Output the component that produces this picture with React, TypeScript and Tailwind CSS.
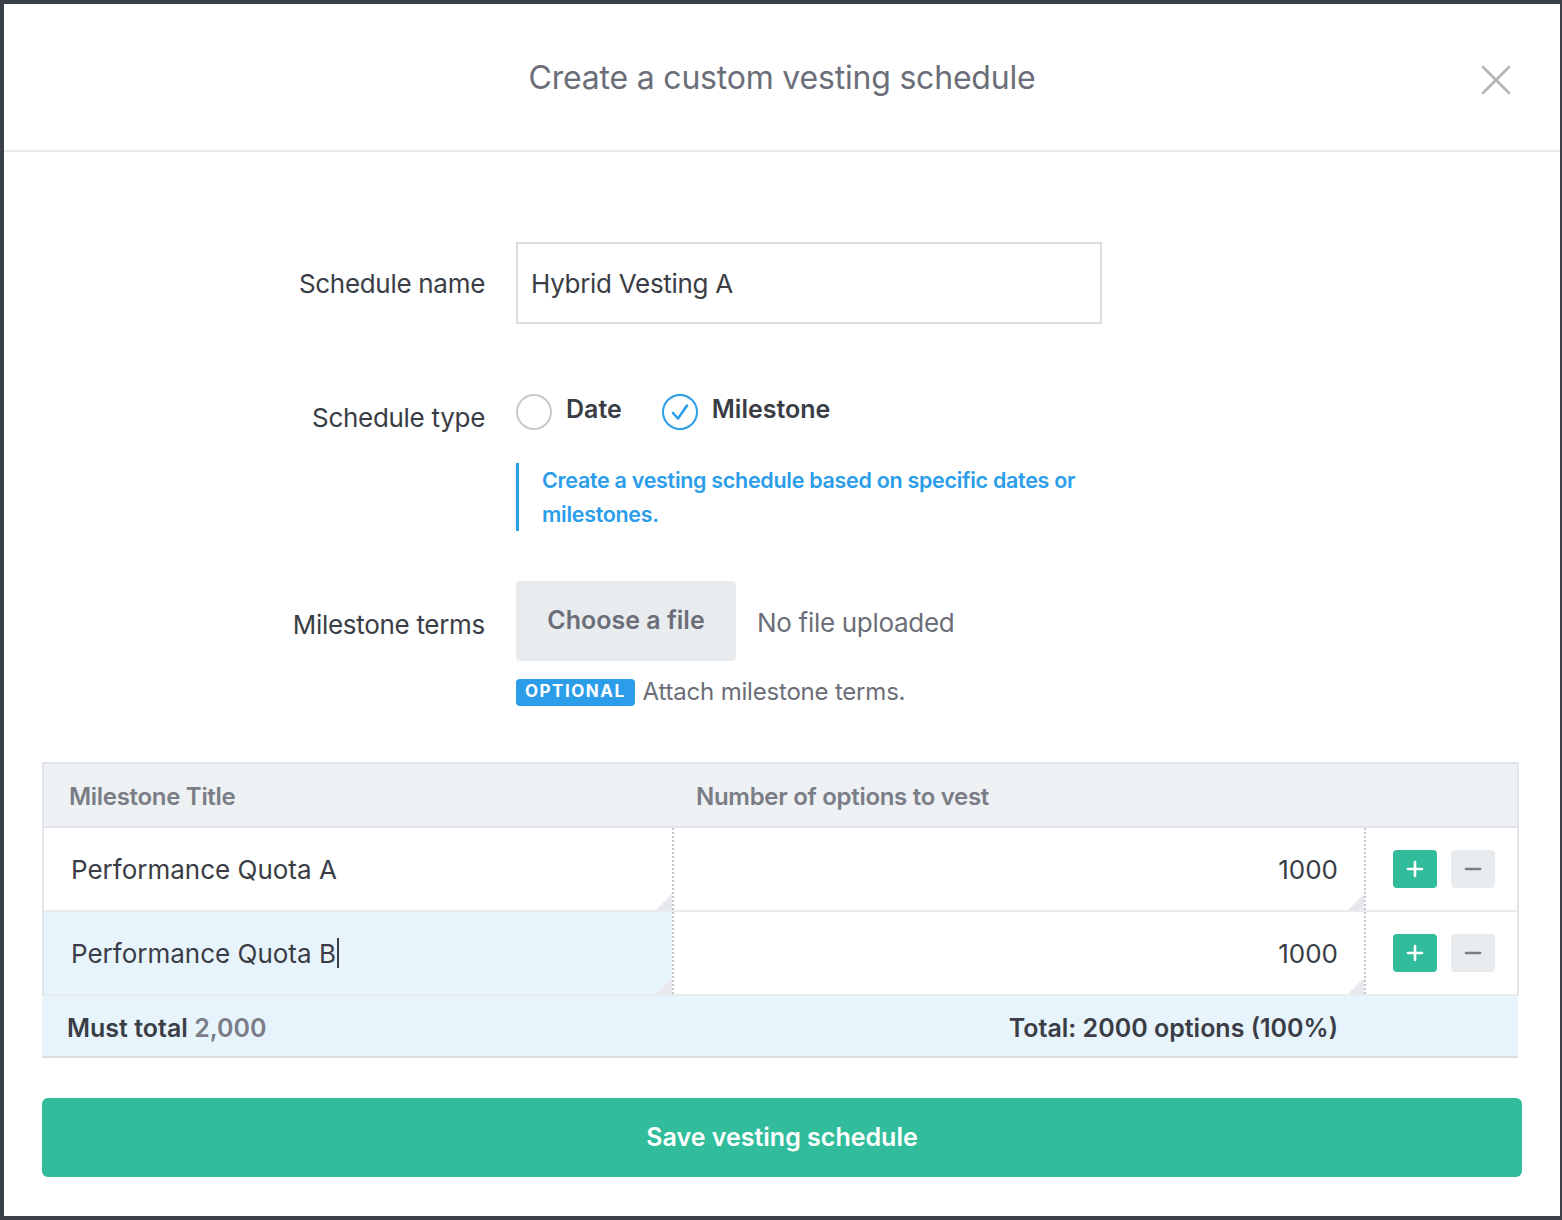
import React from "react";

function Corner() {
  return (
    <svg className="absolute right-0 bottom-0" width="16" height="16" viewBox="0 0 16 16">
      <path d="M16 0 L16 16 L0 16 Z" fill="#e6e8ec" />
    </svg>
  );
}

function Row({ title, value, focused, cursor }: { title: string; value: string; focused?: boolean; cursor?: boolean }) {
  return (
    <div className="flex h-[84px] border-b-2 border-[#e8ecef]">
      <div className={`relative w-[628px] flex items-center pl-[27px] text-[26px] text-[#3a3d45] ${focused ? "bg-[#e8f4fc]" : "bg-white"}`}>
        <span>{title}</span>
        {cursor && <span className="inline-block w-[2px] h-[30px] bg-[#3a3d45] ml-[1px]" />}
        <Corner />
      </div>
      <div className="w-0 border-l-2 border-dotted border-[#c4c6cc]" />
      <div className="relative w-[690px] flex items-center justify-end pr-[26px] text-[26px] text-[#3a3d45] bg-white">
        <span>{value}</span>
        <Corner />
      </div>
      <div className="w-0 border-l-2 border-dotted border-[#c4c6cc]" />
      <div className="flex-1 flex items-center pl-[27px] gap-[14px] bg-white">
        <div className="w-[44px] h-[38px] rounded-[4px] bg-[#31bd9b] flex items-center justify-center">
          <svg width="18" height="18" viewBox="0 0 18 18"><path d="M9 2v14M2 9h14" stroke="white" strokeWidth="2.6" strokeLinecap="round" /></svg>
        </div>
        <div className="w-[44px] h-[38px] rounded-[4px] bg-[#e9ecef] flex items-center justify-center">
          <svg width="18" height="18" viewBox="0 0 18 18"><path d="M2 9h14" stroke="#7a7d86" strokeWidth="2.6" strokeLinecap="round" /></svg>
        </div>
      </div>
    </div>
  );
}

export default function App() {
  return (
    <div className="w-[1562px] h-[1220px] bg-[#3b4048] pt-[4px] pl-[4px] pr-[2px] pb-[4px] font-['Inter',sans-serif]">
      <div className="w-full h-full bg-white flex flex-col">
        {/* Header */}
        <div className="relative h-[148px] border-b-2 border-[#e8ecef] flex items-center justify-center">
          <h1 className="text-[32px] text-[#6b6e78] font-normal tracking-[-0.2px] mt-[2px]">Create a custom vesting schedule</h1>
          <button className="absolute right-[48px] top-[60px] w-[32px] h-[32px]">
            <svg width="32" height="32" viewBox="0 0 32 32">
              <path d="M3 3 L29 29 M29 3 L3 29" stroke="#b4b5bb" strokeWidth="2.6" strokeLinecap="round" />
            </svg>
          </button>
        </div>

        {/* Form */}
        <div className="pt-[90px] flex flex-col">
          <div className="flex items-center">
            <div className="w-[481px] text-right text-[26px] text-[#3a3d45] tracking-[-0.3px]">Schedule name</div>
            <div className="ml-[31px] w-[586px] h-[82px] border-2 border-[#dcdde2] flex items-center pl-[13px] text-[26px] text-[#3a3d45] tracking-[-0.3px]">
              Hybrid Vesting A
            </div>
          </div>

          <div className="flex mt-[70px]">
            <div className="w-[481px] text-right text-[26px] text-[#3a3d45] pt-[4px] tracking-[-0.3px]">Schedule type</div>
            <div className="ml-[31px] flex flex-col">
              <div className="flex items-center h-[36px]">
                <div className="w-[36px] h-[36px] rounded-full border-2 border-[#c9cacf]" />
                <span className="ml-[14px] text-[25px] font-semibold text-[#3a3d45] mt-[-4px]">Date</span>
                <div className="ml-[40px] w-[36px] h-[36px] rounded-full border-2 border-[#2b9de9] flex items-center justify-center">
                  <svg width="24" height="24" viewBox="0 0 24 24"><path d="M5 13 L10 18.5 L19 5.5" fill="none" stroke="#2b9de9" strokeWidth="2.6" strokeLinecap="round" strokeLinejoin="round" /></svg>
                </div>
                <span className="ml-[14px] text-[25px] font-semibold text-[#3a3d45] mt-[-4px]">Milestone</span>
              </div>
              <div className="mt-[33px] border-l-[3px] border-[#2b9de9] pl-[23px] text-[21.5px] leading-[34px] font-semibold text-[#2b9de9] tracking-[-0.3px] w-[600px]">
                Create a vesting schedule based on specific dates or<br />milestones.
              </div>
            </div>
          </div>

          <div className="flex items-center mt-[50px]">
            <div className="w-[481px] text-right text-[26px] text-[#3a3d45] pt-[6px] tracking-[-0.3px]">Milestone terms</div>
            <div className="ml-[31px] w-[220px] h-[80px] rounded-[4px] bg-[#e9ecef] flex items-center justify-center text-[25px] font-semibold text-[#6b6e78]">
              Choose a file
            </div>
            <span className="ml-[21px] text-[26px] text-[#6b6e78] pt-[2px] tracking-[-0.3px]">No file uploaded</span>
          </div>

          <div className="flex items-center mt-[13px] ml-[512px]">
            <span className="h-[27px] px-[9px] rounded-[4px] bg-[#2b9de9] text-white text-[17px] font-bold tracking-[1.5px] flex items-center">OPTIONAL</span>
            <span className="ml-[8px] text-[24px] text-[#6b6e78] tracking-[-0.2px]">Attach milestone terms.</span>
          </div>

          {/* Table */}
          <div className="mt-[52px] mx-[38px]">
            <div className="mr-[3px] border-2 border-[#e1e5ea] border-b-0">
              <div className="flex h-[64px] pt-[4px] bg-[#eef1f4] border-b-2 border-[#e1e5ea] items-center text-[24px] font-semibold text-[#7a7d86] tracking-[-0.3px]">
                <div className="w-[626px] pl-[25px]">Milestone Title</div>
                <div className="pl-[26px]">Number of options to vest</div>
              </div>
              <Row title="Performance Quota A" value="1000" />
              <Row title="Performance Quota B" value="1000" focused cursor />
            </div>
            <div className="mr-[4px] h-[62px] pt-[6px] bg-[#e8f4fc] border-b-2 border-[#dcdde2] flex items-center justify-between pl-[25px] pr-[180px] text-[25px] font-semibold text-[#3a3d45]">
              <span>Must total <span className="text-[#7a7d86]">2,000</span></span>
              <span>Total: 2000 options (100%)</span>
            </div>
            <button className="mt-[40px] w-full h-[79px] rounded-[6px] bg-[#31bd9b] text-white text-[25px] font-semibold">
              Save vesting schedule
            </button>
          </div>
        </div>
      </div>
    </div>
  );
}
